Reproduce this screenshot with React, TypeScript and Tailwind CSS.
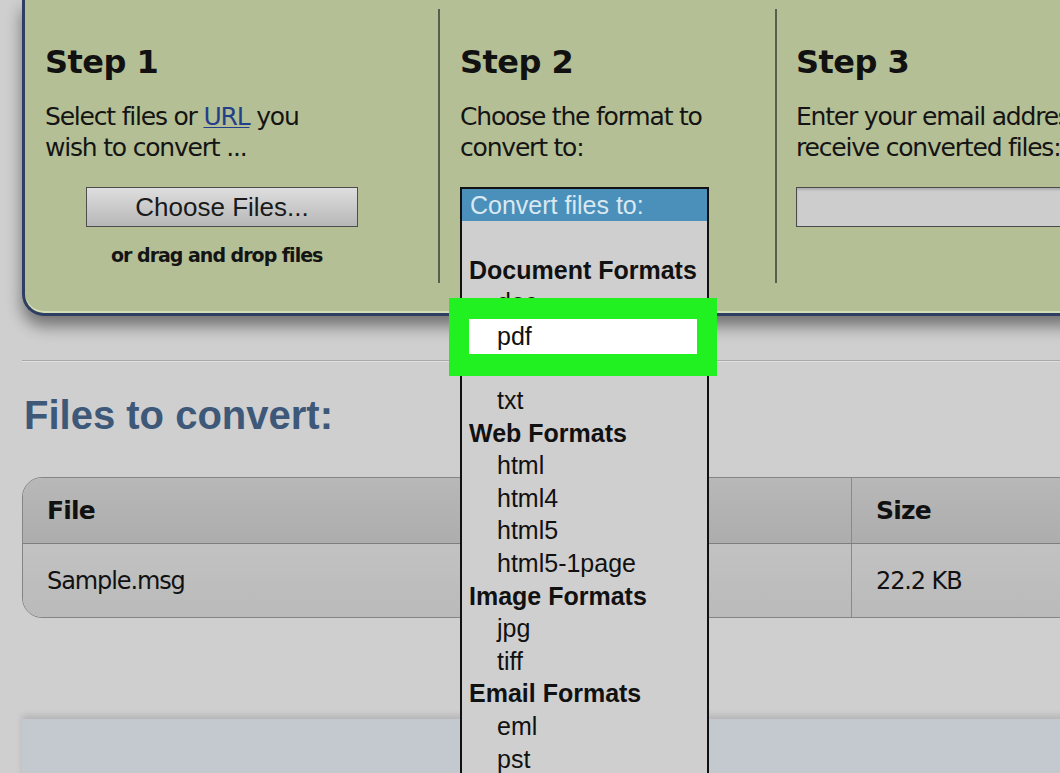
const verdana = "font-['DejaVu_Sans',Verdana,sans-serif]";
const arial = "font-['Liberation_Sans',Arial,sans-serif]";

const groups = [
  { title: "Document Formats", items: ["doc", "pdf", "rtf", "txt"] },
  { title: "Web Formats", items: ["html", "html4", "html5", "html5-1page"] },
  { title: "Image Formats", items: ["jpg", "tiff"] },
  { title: "Email Formats", items: ["eml", "pst", "msg"] },
];

const StepTitle = ({ n }: { n: number }) => (
  <h2 className="pt-[42px] text-[32px] leading-[40px] font-bold tracking-[-0.5px] text-[#111]">
    Step {n}
  </h2>
);

const Divider = () => <div className="mt-[9px] h-[274px] w-[2px] shrink-0 bg-[#5b5e4d]" />;

const FormatList = () => (
  <div className={`absolute left-0 top-[187px] z-20 h-[600px] w-[249px] border-2 border-[#111] bg-[#cfcfcf] ${arial}`}>
    <div className="h-[32px] bg-[#4b90bb] pl-[8px] text-[25px] leading-[32px] text-[#d9e8f1]">
      Convert files to:
    </div>
    <div className="h-[32.6px]" />
    {groups.map((g) => (
      <div key={g.title}>
        <div className="h-[32.6px] pl-[7px] text-[25px] font-bold leading-[32.6px] text-[#111]">{g.title}</div>
        {g.items.map((it) => (
          <div key={it} className="h-[32.6px] pl-[35px] text-[25px] leading-[32.6px] text-[#111]">
            {it}
          </div>
        ))}
      </div>
    ))}

    {/* highlight annotation */}
    <div className="absolute left-[-13px] top-[109px] h-[78px] w-[268px] border-x-[20px] border-t-[21px] border-b-[22px] border-[#21f121] bg-white">
      <div className="pl-[28px] text-[25px] leading-[35px] text-[#111]">pdf</div>
    </div>
  </div>
);

export default function App() {
  return (
    <div className={`relative h-[773px] w-[1060px] overflow-hidden bg-[#cfcfcf] ${verdana}`}>
      {/* steps panel */}
      <div className="relative z-10 ml-[22px] flex h-[316px] w-[1100px] rounded-bl-[22px] border-b-[3px] border-l-[3px] border-[#2e3d62] bg-[#b4bf95] shadow-[0_10px_16px_rgba(0,0,0,0.45),inset_0_-2px_0_#d3dfb6]">
        <div className="w-[413px] shrink-0 pl-[20px]">
          <StepTitle n={1} />
          <p className="mt-[19px] text-[25px] leading-[31px] tracking-[-1.2px] text-[#141414]">
            Select files or{" "}
            <span className="text-[#233f8c] underline decoration-1 underline-offset-2">URL</span> you
            <br />
            wish to convert ...
          </p>
          <button
            className={`ml-[41px] mt-[24px] h-[40px] w-[272px] border border-[#4d4d4d] bg-gradient-to-b from-[#dedede] to-[#b7b7b7] text-[26px] leading-[38px] text-[#1a1a1a] ${arial}`}
          >
            Choose Files...
          </button>
          <p className="ml-[66px] mt-[16px] text-[19px] font-bold leading-[24px] tracking-[-1px] text-[#141414]">
            or drag and drop files
          </p>
        </div>

        <Divider />

        <div className="relative w-[335px] shrink-0 pl-[20px]">
          <StepTitle n={2} />
          <p className="mt-[19px] text-[25px] leading-[31px] tracking-[-1.2px] text-[#141414]">
            Choose the format to
            <br />
            convert to:
          </p>
          <div className="absolute left-[20px] top-0">
            <FormatList />
          </div>
        </div>

        <Divider />

        <div className="min-w-0 flex-1 pl-[19px]">
          <StepTitle n={3} />
          <p className="mt-[19px] whitespace-nowrap text-[25px] leading-[31px] tracking-[-1.2px] text-[#141414]">
            Enter your email address to
            <br />
            receive converted files:
          </p>
          <div className="mt-[24px] h-[40px] w-[400px] border border-[#4a4a4a] bg-[#cdcdcd] shadow-[inset_0_2px_2px_rgba(0,0,0,0.15)]" />
        </div>
      </div>

      {/* rule */}
      <div className="ml-[22px] mt-[44px] h-[2px] border-b border-[#e0e0e0] bg-[#a9a9a9]" />

      <h1 className={`ml-[24px] mt-[29px] text-[40px] font-bold leading-[48px] text-[#3d5878] ${arial}`}>
        Files to convert:
      </h1>

      {/* files table */}
      <div className="ml-[22px] mt-[38px] w-[1100px] overflow-hidden rounded-l-[20px] border border-[#858585] text-[#111]">
        <div className="flex h-[66px] border-b border-[#7e7e7e] bg-gradient-to-b from-[#b8b8b8] to-[#adadad] text-[25px] font-bold tracking-[-0.8px]">
          <div className="flex w-[829px] items-center border-r border-[#8a8a8a] pl-[24px]">File</div>
          <div className="flex flex-1 items-center pl-[24px]">Size</div>
        </div>
        <div className="flex h-[73px] bg-gradient-to-b from-[#c2c2c2] to-[#bababa] text-[24px] tracking-[-1.1px]">
          <div className="flex w-[829px] items-center border-r border-[#8a8a8a] pl-[24px]">Sample.msg</div>
          <div className="flex flex-1 items-center pl-[24px]">22.2 KB</div>
        </div>
      </div>

      {/* next section, blurred */}
      <div className="ml-[22px] mt-[101px] h-[80px] w-[1100px] bg-[#c4c9d0] shadow-[0_-4px_6px_rgba(0,0,0,0.12)]" />
    </div>
  );
}
